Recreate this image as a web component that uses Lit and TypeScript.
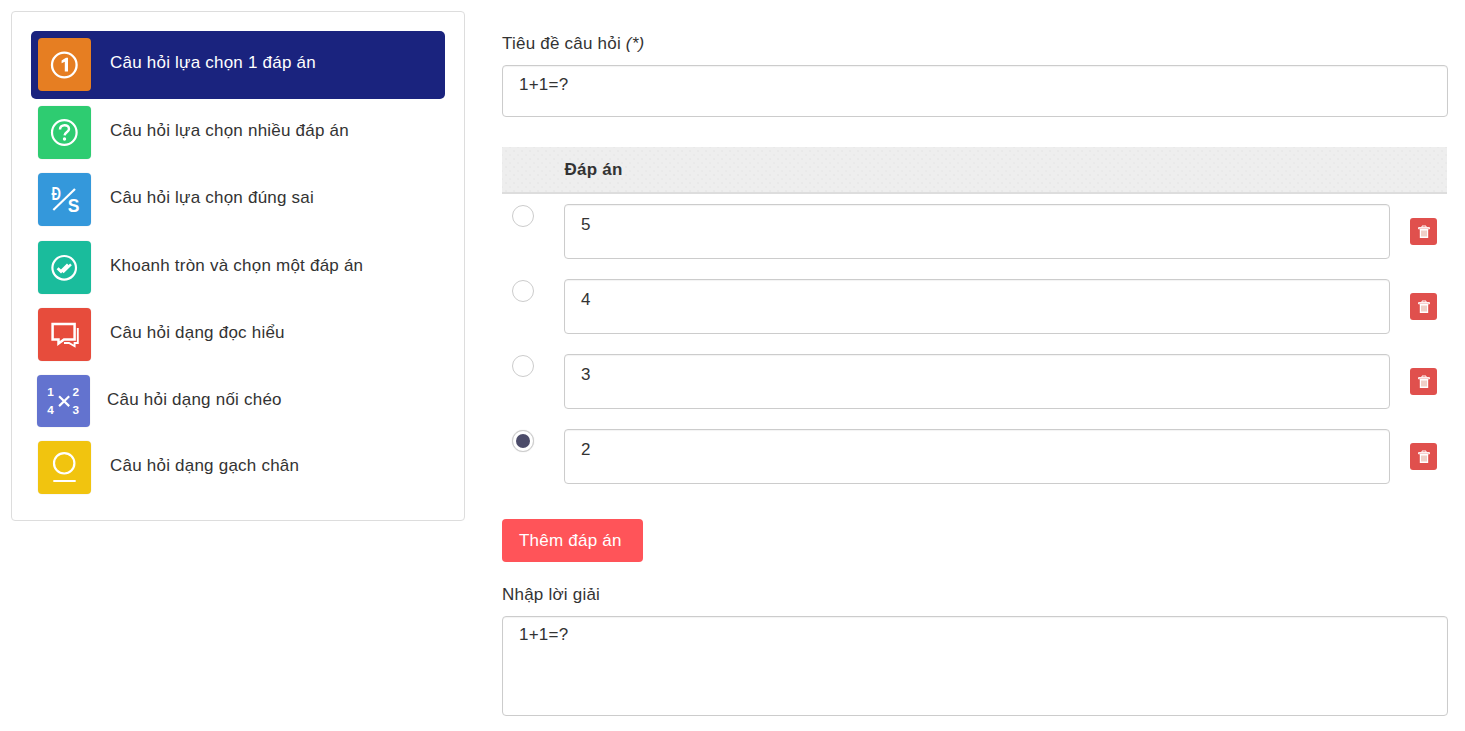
import { LitElement, html, css, svg } from "lit";
import { customElement } from "lit/decorators.js";

const items = [
  { label: "Câu hỏi lựa chọn 1 đáp án", color: "#e67e22", cls: "active", icon: svg`<circle cx="26.3" cy="27" r="12.3" fill="none" stroke="#fff" stroke-width="2.3"/><path d="M23.6 22.4 L28 19.8 H30 V33.6 H26.8 V23.8 L23.6 25.3Z" fill="#fff"/>` },
  { label: "Câu hỏi lựa chọn nhiều đáp án", color: "#2ecc71", cls: "h67", icon: svg`<circle cx="26.3" cy="26.5" r="12.3" fill="none" stroke="#fff" stroke-width="2.2"/><path d="M22 23.5 C22 17.8 31 17.8 31 23 C31 26 27 26 26.6 29.4" fill="none" stroke="#fff" stroke-width="2.5"/><circle cx="26.5" cy="33" r="1.7" fill="#fff"/>` },
  { label: "Câu hỏi lựa chọn đúng sai", color: "#3498db", cls: "", icon: svg`<path d="M15.3 37 L37 16" stroke="#fff" stroke-width="2.2" fill="none"/><text x="13.4" y="27" class="ds" textLength="9.4" lengthAdjust="spacingAndGlyphs">Đ</text><text x="29.8" y="39" class="ds big">S</text>` },
  { label: "Khoanh tròn và chọn một đáp án", color: "#1abc9c", cls: "h67", icon: svg`<circle cx="26.2" cy="26.8" r="11.8" fill="none" stroke="#fff" stroke-width="2.2"/><path d="M19.6 27.2 L23 30.6 L30 23.4" fill="none" stroke="#fff" stroke-width="2.8"/><path d="M23.6 28.6 L25.6 30.6 L33 23.4" fill="none" stroke="#fff" stroke-width="2.4"/>` },
  { label: "Câu hỏi dạng đọc hiểu", color: "#e74c3c", cls: "h67", icon: svg`<path d="M14.6 16 H36.6 V31.5 H26 L20.5 35.5 V31.5 H14.6Z" fill="none" stroke="#fff" stroke-width="2.5"/><path d="M39.8 20 V35 H36.6 V38.2 L31 35 H26" fill="none" stroke="#fff" stroke-width="1.9"/>` },
  { label: "Câu hỏi dạng nối chéo", color: "#6373cf", cls: "cross", icon: svg`<text x="10" y="21" class="n">1</text><text x="35.7" y="21" class="n">2</text><text x="10" y="40" class="n">4</text><text x="35.7" y="40" class="n">3</text><path d="M22 21.7 L32.3 31.7 M32.3 21.7 L22 31.7" stroke="#fff" stroke-width="2.2"/>` },
  { label: "Câu hỏi dạng gạch chân", color: "#f1c40f", cls: "last", icon: svg`<circle cx="26.2" cy="22.3" r="10.2" fill="none" stroke="#fff" stroke-width="2.2"/><path d="M15.3 40 H37.7" stroke="#fff" stroke-width="2.2"/>` },
];

const answers = [
  { v: "5", on: false },
  { v: "4", on: false },
  { v: "3", on: false },
  { v: "2", on: true },
];

@customElement("app-root")
export class AppRoot extends LitElement {
  static styles = css`
    :host { display: block; font-family: "Liberation Sans", Arial, sans-serif; color: #333; font-size: 17px; letter-spacing: 0.22px; }
    .page { display: flex; align-items: flex-start; padding: 11px 17px 15px 11px; }
    .side { width: 454px; height: 510px; box-sizing: border-box; border: 1px solid #ddd; border-radius: 4px; padding: 19px 19px 0; flex: none; }
    .item { display: flex; align-items: flex-start; height: 68px; padding: 7px 0 0 7px; box-sizing: border-box; border-radius: 5px; gap: 19px; }
    .item span { line-height: 50px; }
    .item.active { background: #1a237e; color: #fff; }
    .h67 { height: 67px; }
    .cross { height: 66px; padding-left: 6px; gap: 17px; }
    .cross .ico { height: 52px; }
    .ico { width: 53px; height: 53px; border-radius: 4px; flex: none; display: block; box-shadow: 0 0 0 0.5px rgba(0,0,0,.06); }
    .ds { font: bold 18px "Liberation Sans", sans-serif; letter-spacing: 0; fill: #fff; }
    .ds.big { font-size: 17.5px; }
    .n { font: bold 12px "Liberation Sans", sans-serif; letter-spacing: 0; fill: #fff; }
    .main { width: 946px; margin-left: 37px; flex: none; padding-top: 23px; }
    label { display: block; height: 20px; line-height: 20px; color: #333; margin-bottom: 11px; }
    label i { font-style: italic; }
    .box { box-sizing: border-box; border: 1px solid #ccc; border-radius: 4px; padding: 8px 16px; line-height: 22px; color: #333; background: #fff; box-shadow: inset 0 1px 1px rgba(0,0,0,.05); }
    .title { height: 52px; }
    .thead { margin: 30px 1px 0 0; height: 47px; box-sizing: border-box; background-color: #eee; background-image: radial-gradient(#e2e2e2 0.6px, transparent 0.8px), radial-gradient(#e4e4e4 0.6px, transparent 0.8px); background-size: 8px 8px; background-position: 0 0, 4px 4px; border-bottom: 2px solid #ddd; display: flex; align-items: center; padding: 0 0 0 62.5px; font-weight: bold; }
    .rows { display: flex; flex-direction: column; gap: 20px; padding-top: 10px; }
    .row { display: grid; grid-template-columns: 62px 826px 1fr; align-items: start; height: 55px; }
    .radio { width: 22px; height: 22px; box-sizing: border-box; margin: 1px 0 0 10px; border: 1px solid #ccc; border-radius: 50%; background: #fff; display: flex; align-items: center; justify-content: center; }
    .radio.on { box-shadow: 0 0 1px rgba(0,0,0,.2); }
    .radio.on::after { content: ""; width: 14px; height: 14px; border-radius: 50%; background: #4c4c6a; }
    .ans { height: 55px; padding-top: 9px; }
    .del { width: 27px; height: 27px; margin: 14px 0 0 20px; background: #e0504d; border-radius: 3px; display: flex; align-items: center; justify-content: center; }
    .del svg { display: block; }
    .add { margin-top: 35px; width: 141px; height: 43px; box-sizing: border-box; padding-left: 17px; background: #ff5459; color: #fff; border-radius: 4px; display: flex; align-items: center; }
    .sol { margin-top: 23px; }
    .area { height: 100px; padding-top: 7px; }
  `;

  render() {
    return html`<div class="page">
      <aside class="side">
        ${items.map((i) => html`<div class="item ${i.cls}">
          <svg class="ico" viewBox="0 0 53 53" style="background:${i.color}">${i.icon}</svg>
          <span>${i.label}</span>
        </div>`)}
      </aside>
      <main class="main">
        <label>Tiêu đề câu hỏi <i>(*)</i></label>
        <div class="box title">1+1=?</div>
        <div class="thead">Đáp án</div>
        <div class="rows">
          ${answers.map((a) => html`<div class="row">
            <div class="radio ${a.on ? "on" : ""}"></div>
            <div class="box ans">${a.v}</div>
            <div class="del"><svg width="14" height="14" viewBox="0 0 14 14"><path d="M5 2.2 V1 H9 V2.2 M1.5 2.6 H12.5 V3.8 H1.5Z" fill="none" stroke="#fff" stroke-width="1"/><path d="M2.8 4 H11.2 V13 H2.8Z" fill="#fff"/><path d="M5 5.5 V11.5 M7 5.5 V11.5 M9 5.5 V11.5" stroke="#e0a090" stroke-width="1"/></svg></div>
          </div>`)}
        </div>
        <div class="add">Thêm đáp án</div>
        <label class="sol">Nhập lời giải</label>
        <div class="box area">1+1=?</div>
      </main>
    </div>`;
  }
}
